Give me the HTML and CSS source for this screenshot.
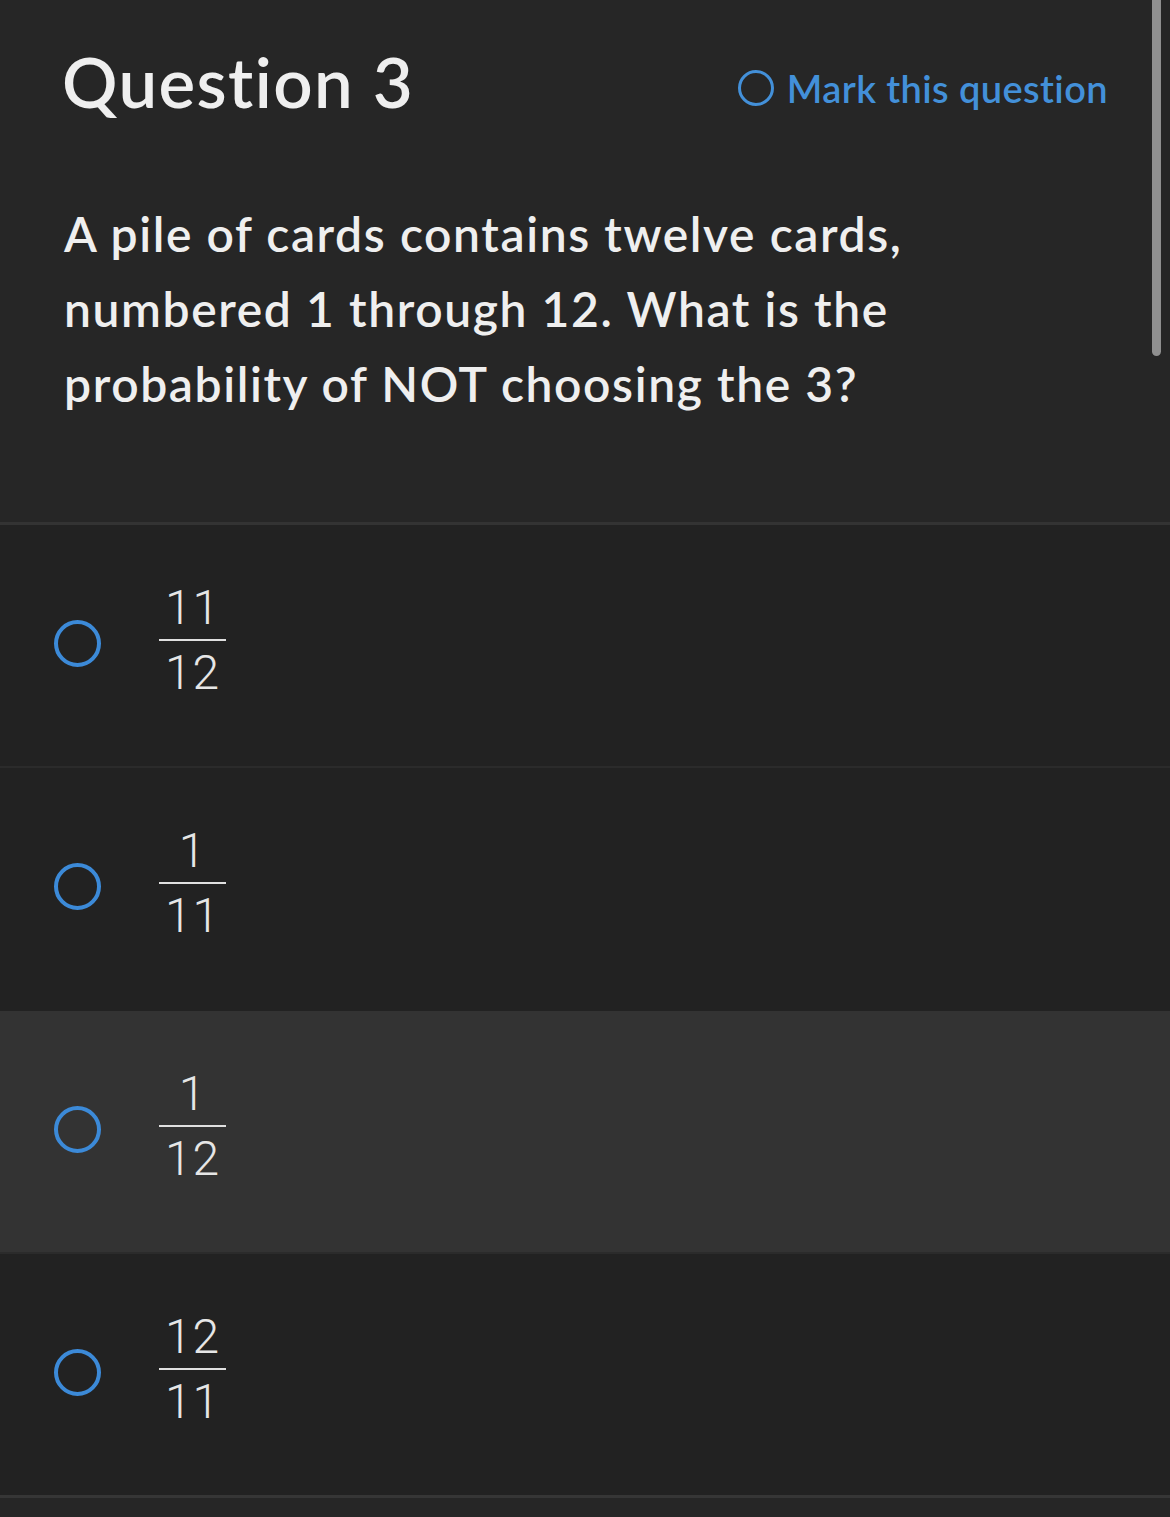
FILE: index.html
```html
<!DOCTYPE html>
<html>
<head>
<meta charset="utf-8">
<link rel="stylesheet" href="styles.css">
</head>
<body>
<div class="page">
  <section class="question">
    <header class="q-header">
      <h1 class="q-title">Question 3</h1>
      <div class="mark"><span class="mark-circle"></span><span class="mark-text">Mark this question</span></div>
    </header>
    <p class="q-text">A pile of cards contains twelve cards, numbered 1 through 12. What is the probability of NOT choosing the 3?</p>
  </section>
  <ul class="options">
    <li class="option"><span class="radio"></span><span class="frac"><span class="num">11</span><span class="den">12</span></span></li>
    <li class="option"><span class="radio"></span><span class="frac"><span class="num">1</span><span class="den">11</span></span></li>
    <li class="option option-hover"><span class="radio"></span><span class="frac"><span class="num">1</span><span class="den">12</span></span></li>
    <li class="option"><span class="radio"></span><span class="frac"><span class="num">12</span><span class="den">11</span></span></li>
  </ul>
</div>
<div class="scrollbar"></div>
</body>
</html>
```
FILE: styles.css
```css
html, body {
  margin: 0;
  padding: 0;
  background: #262626;
  height: 1517px;
  overflow: hidden;
}
.page {
  font-family: Lato, "Open Sans", sans-serif;
  color: #eeeeee;
}
.question {
  height: 522px;
  box-sizing: border-box;
  padding: 0 62px 0 62px;
}
.q-header {
  display: flex;
  justify-content: space-between;
  align-items: flex-start;
  padding-top: 42px;
}
.q-title {
  margin: 0;
  font-size: 69px;
  font-weight: 600;
  line-height: 80px;
  letter-spacing: 1.4px;
  color: #efefef;
}
.mark {
  display: flex;
  align-items: center;
  margin-top: 24px;
  color: #4390d9;
}
.mark-circle {
  width: 30px;
  height: 30px;
  border: 3.5px solid #4390d9;
  border-radius: 50%;
  margin-right: 13px;
}
.mark-text {
  font-size: 38px;
  font-weight: 600;
  line-height: 44px;
  letter-spacing: 0.4px;
}
.q-text {
  margin: 74px 0 0 2px;
  font-size: 48px;
  font-weight: 600;
  line-height: 75px;
  letter-spacing: 1.6px;
  color: #efefef;
  max-width: 900px;
}
.options {
  list-style: none;
  margin: 0;
  padding: 0;
  border-top: 3px solid #333333;
  border-bottom: 3px solid #363636;
}
.option {
  height: 241px;
  display: flex;
  align-items: center;
  padding-left: 54px;
  background: #222222;
  border-top: 2px solid #2b2b2b;
}
.option:first-child {
  border-top: none;
}
.option-hover {
  background: #333333;
  border-top-color: #222222;
}
.radio {
  width: 39px;
  height: 39px;
  border: 4px solid #3c8ad8;
  border-radius: 50%;
  flex: none;
  margin-top: -4px;
}
.frac {
  display: inline-flex;
  flex-direction: column;
  align-items: stretch;
  margin-left: 58px;
  margin-top: -10px;
  width: 67px;
  font-family: Roboto, "Liberation Sans", sans-serif;
  font-weight: 300;
  font-size: 48px;
  line-height: 52px;
  letter-spacing: 1px;
  color: #e6e6e6;
  text-align: center;
}
.num {
  border-bottom: 2.5px solid #e0e0e0;
  padding-bottom: 5px;
}
.den {
  padding-top: 6px;
}
.scrollbar {
  position: fixed;
  top: 0;
  left: 1152px;
  width: 9px;
  height: 356px;
  background: #8f8f8f;
  border-radius: 0 0 5px 5px;
}
```
